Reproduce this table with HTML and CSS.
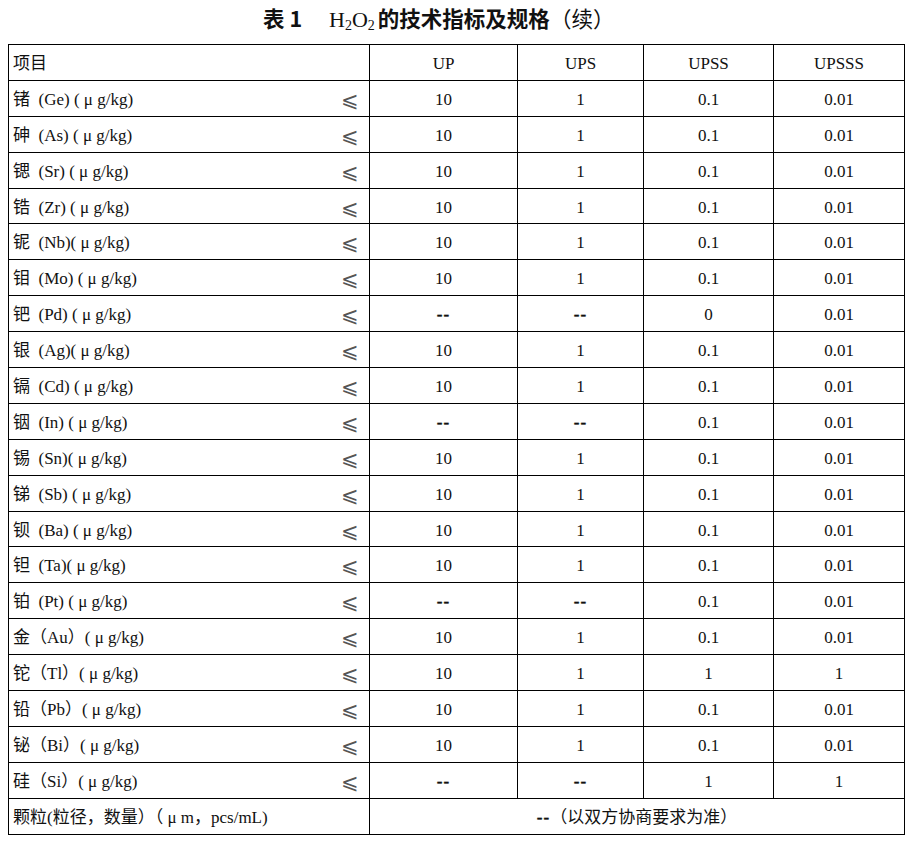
FILE: index.html
```html
<!DOCTYPE html>
<html lang="zh">
<head>
<meta charset="utf-8">
<title>H2O2 技术指标及规格</title>
<link rel="stylesheet" href="styles.css">
</head>
<body>
<h1 class="title"><span class="b">表 1</span><span class="formula">H<sub>2</sub>O<sub>2</sub></span><span class="b">的技术指标及规格</span><span class="cont">（续）</span></h1>
<table class="spec">
<colgroup><col class="c0"><col class="c1"><col class="c2"><col class="c3"><col class="c4"></colgroup>
<tr><td class="item">项目</td><td>UP</td><td>UPS</td><td>UPSS</td><td>UPSSS</td></tr>
<tr><td class="item"><span class="lbl">锗&nbsp; (Ge) ( μ g/kg)</span><span class="le">⩽</span></td><td>10</td><td>1</td><td>0.1</td><td>0.01</td></tr>
<tr><td class="item"><span class="lbl">砷&nbsp; (As) ( μ g/kg)</span><span class="le">⩽</span></td><td>10</td><td>1</td><td>0.1</td><td>0.01</td></tr>
<tr><td class="item"><span class="lbl">锶&nbsp; (Sr) ( μ g/kg)</span><span class="le">⩽</span></td><td>10</td><td>1</td><td>0.1</td><td>0.01</td></tr>
<tr><td class="item"><span class="lbl">锆&nbsp; (Zr) ( μ g/kg)</span><span class="le">⩽</span></td><td>10</td><td>1</td><td>0.1</td><td>0.01</td></tr>
<tr><td class="item"><span class="lbl">铌&nbsp; (Nb)( μ g/kg)</span><span class="le">⩽</span></td><td>10</td><td>1</td><td>0.1</td><td>0.01</td></tr>
<tr><td class="item"><span class="lbl">钼&nbsp; (Mo) ( μ g/kg)</span><span class="le">⩽</span></td><td>10</td><td>1</td><td>0.1</td><td>0.01</td></tr>
<tr><td class="item"><span class="lbl">钯&nbsp; (Pd) ( μ g/kg)</span><span class="le">⩽</span></td><td class="dash">--</td><td class="dash">--</td><td>0</td><td>0.01</td></tr>
<tr><td class="item"><span class="lbl">银&nbsp; (Ag)( μ g/kg)</span><span class="le">⩽</span></td><td>10</td><td>1</td><td>0.1</td><td>0.01</td></tr>
<tr><td class="item"><span class="lbl">镉&nbsp; (Cd) ( μ g/kg)</span><span class="le">⩽</span></td><td>10</td><td>1</td><td>0.1</td><td>0.01</td></tr>
<tr><td class="item"><span class="lbl">铟&nbsp; (In) ( μ g/kg)</span><span class="le">⩽</span></td><td class="dash">--</td><td class="dash">--</td><td>0.1</td><td>0.01</td></tr>
<tr><td class="item"><span class="lbl">锡&nbsp; (Sn)( μ g/kg)</span><span class="le">⩽</span></td><td>10</td><td>1</td><td>0.1</td><td>0.01</td></tr>
<tr><td class="item"><span class="lbl">锑&nbsp; (Sb) ( μ g/kg)</span><span class="le">⩽</span></td><td>10</td><td>1</td><td>0.1</td><td>0.01</td></tr>
<tr><td class="item"><span class="lbl">钡&nbsp; (Ba) ( μ g/kg)</span><span class="le">⩽</span></td><td>10</td><td>1</td><td>0.1</td><td>0.01</td></tr>
<tr><td class="item"><span class="lbl">钽&nbsp; (Ta)( μ g/kg)</span><span class="le">⩽</span></td><td>10</td><td>1</td><td>0.1</td><td>0.01</td></tr>
<tr><td class="item"><span class="lbl">铂&nbsp; (Pt) ( μ g/kg)</span><span class="le">⩽</span></td><td class="dash">--</td><td class="dash">--</td><td>0.1</td><td>0.01</td></tr>
<tr><td class="item"><span class="lbl">金（Au）( μ g/kg)</span><span class="le">⩽</span></td><td>10</td><td>1</td><td>0.1</td><td>0.01</td></tr>
<tr><td class="item"><span class="lbl">铊（Tl）( μ g/kg)</span><span class="le">⩽</span></td><td>10</td><td>1</td><td>1</td><td>1</td></tr>
<tr><td class="item"><span class="lbl">铅（Pb）( μ g/kg)</span><span class="le">⩽</span></td><td>10</td><td>1</td><td>0.1</td><td>0.01</td></tr>
<tr><td class="item"><span class="lbl">铋（Bi）( μ g/kg)</span><span class="le">⩽</span></td><td>10</td><td>1</td><td>0.1</td><td>0.01</td></tr>
<tr><td class="item"><span class="lbl">硅（Si）( μ g/kg)</span><span class="le">⩽</span></td><td class="dash">--</td><td class="dash">--</td><td>1</td><td>1</td></tr>
<tr><td class="item">颗粒(粒径，数量）（ μ m，pcs/mL)</td><td colspan="4"><span class="dash">--</span>（以双方协商要求为准）</td></tr>
</table>
</body>
</html>
```
FILE: styles.css
```css
html, body {
  margin: 0;
  padding: 0;
  background: #ffffff;
}
body {
  padding: 0 8px;
  color: #111;
  font-family: "Liberation Serif", "Noto Sans CJK SC", serif;
}
.title {
  margin: 0;
  height: 44px;
  box-sizing: border-box;
  padding: 4px 0 0 255px;
  font-size: 21.5px;
  font-weight: normal;
  line-height: 28px;
  white-space: nowrap;
}
.title .b {
  font-family: "Noto Sans CJK SC", sans-serif;
  font-weight: bold;
}
.title .formula {
  font-family: "Liberation Serif", serif;
  margin-left: 27px;
  margin-right: 3px;
  font-size: 22px;
}
.title sub {
  font-size: 14px;
  vertical-align: -3px;
  line-height: 0;
}
.title .cont {
  font-family: "Noto Sans CJK SC", sans-serif;
  font-weight: normal;
}
.spec {
  border-collapse: collapse;
  table-layout: fixed;
  width: 897px;
  font-family: "Liberation Serif", "Noto Sans CJK SC", serif;
  font-size: 17px;
}
.c0 { width: 361px; }
.c1 { width: 148px; }
.c2 { width: 126px; }
.c3 { width: 130px; }
.c4 { width: 131px; }
.spec tr {
  height: 35.9px;
}
.spec td {
  border: 1px solid #000;
  padding: 3px 0 0;
  text-align: center;
  vertical-align: middle;
  white-space: nowrap;
  line-height: 20px;
  font-family: "Liberation Serif", "Noto Sans CJK SC", serif;
}
.spec td.item {
  text-align: left;
  padding-left: 4px;
}
.spec td.item:has(.le) {
  padding-right: 10px;
}
.item .lbl {
  float: left;
}
.item .le {
  float: right;
  font-family: "DejaVu Sans", "Liberation Serif", serif;
  font-size: 21px;
  line-height: 20px;
  font-weight: 200;
  color: #555;
}
.dash {
  font-weight: bold;
  letter-spacing: 1px;
  -webkit-text-stroke: 0.4px #111;
}
```
